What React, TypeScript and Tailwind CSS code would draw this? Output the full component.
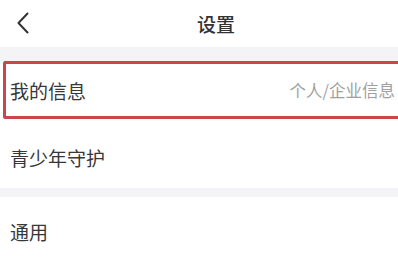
import React from "react";

export default function App() {
  return (
    <div
      className="w-[398px] h-[265px] overflow-hidden bg-white text-[#383838]"
      style={{ fontFamily: '"Noto Sans CJK SC", "Noto Sans", sans-serif' }}
    >
      <div className="relative h-[47px] flex items-center justify-center bg-white">
        <svg
          className="absolute left-[16px] top-[12px]"
          width="14"
          height="22"
          viewBox="0 0 14 22"
          fill="none"
        >
          <path d="M11.5 1.5L2.5 11l9 9.5" stroke="#333" strokeWidth="2" strokeLinecap="round" strokeLinejoin="round" />
        </svg>
        <span className="ml-[34px] text-[19px] font-medium leading-none text-[#333]">设置</span>
      </div>
      <div className="h-[14px] bg-[#f4f4f6]" />
      <div className="ml-[3px] h-[58px] flex items-center justify-between border-y-[3px] border-l-[3px] border-[#c9464b] rounded-l-[3px] bg-white pl-[4px] pr-[3px]">
        <span className="text-[19px] leading-none">我的信息</span>
        <span className="text-[16.5px] leading-none text-[#a0a0a0]">个人/企业信息</span>
      </div>
      <div className="h-[69px] flex items-center pl-[10px] pt-[8px] bg-white">
        <span className="text-[19px] leading-none">青少年守护</span>
      </div>
      <div className="h-[9px] bg-[#f4f4f6]" />
      <div className="h-[68px] flex items-center pl-[10px] bg-white">
        <span className="text-[19px] leading-none">通用</span>
      </div>
    </div>
  );
}
